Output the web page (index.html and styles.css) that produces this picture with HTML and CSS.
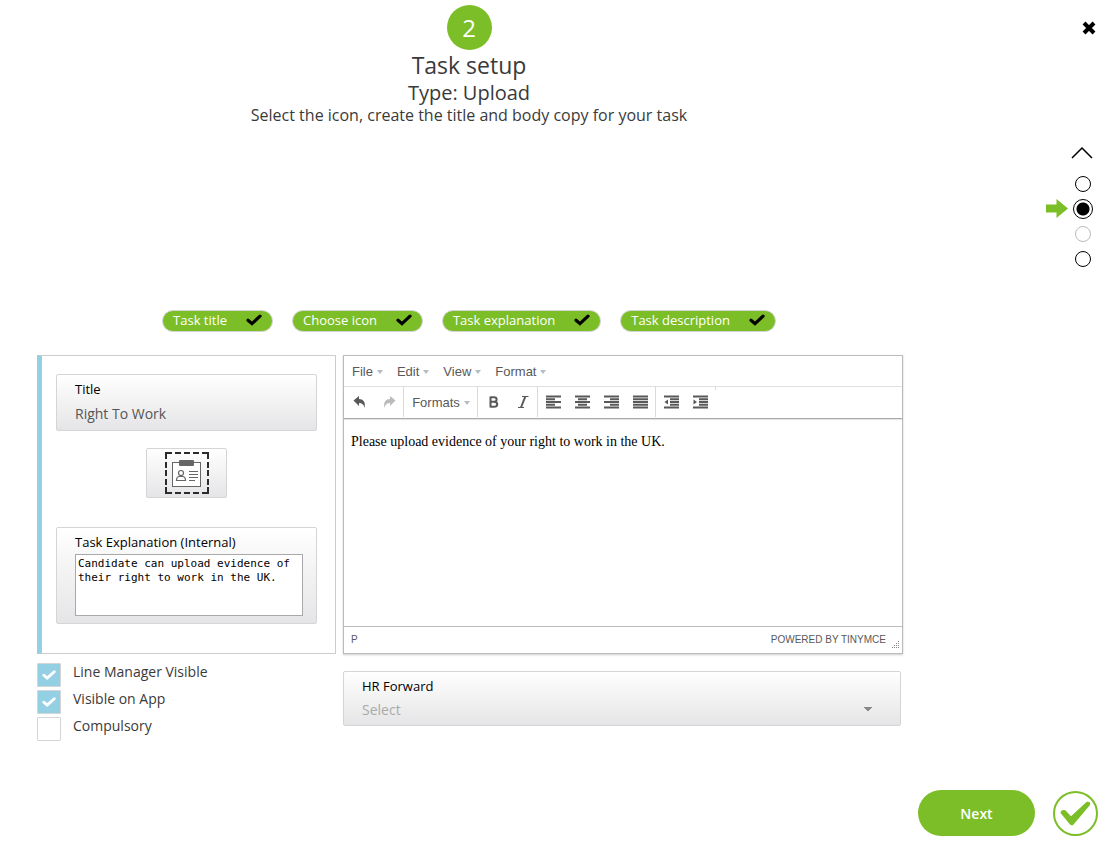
FILE: index.html
```html
<!DOCTYPE html>
<html lang="en">
<head>
    <meta charset="UTF-8">
    <meta name="viewport" content="width=device-width, initial-scale=1.0">
    <title>Task setup</title>
    <link rel="stylesheet" href="styles.css">
</head>
<body>
    <!-- shared icons -->
    <svg class="sprite" aria-hidden="true">
        <symbol id="tick" viewBox="0 0 16 12"><path d="M2 6.200 6 9.600 14 2.200" fill="none" stroke="currentColor" stroke-width="3.2" stroke-linecap="round"/></symbol>
        <symbol id="undo" viewBox="0 0 14 14"><path d="M0.5 5.500 6 1v3c4 0 7 3 5.500 9C11 9.500 9 8 6 8v3z" fill="currentColor"/></symbol>
    </svg>

    <div class="page">
        <div class="layout">
            <main class="main">
                <header class="header">
                    <div class="badge">2</div>
                    <h1>Task setup</h1>
                    <h2>Type: Upload</h2>
                    <p>Select the icon, create the title and body copy for your task</p>
                </header>

                <ul class="steps">
                    <li>Task title <svg class="tick"><use href="#tick"/></svg></li>
                    <li>Choose icon <svg class="tick"><use href="#tick"/></svg></li>
                    <li>Task explanation <svg class="tick"><use href="#tick"/></svg></li>
                    <li>Task description <svg class="tick"><use href="#tick"/></svg></li>
                </ul>

                <div class="columns">
                    <div class="left">
                        <section class="panel">
                            <div class="field">
                                <label for="title">Title</label>
                                <input type="text" id="title" value="Right To Work">
                            </div>
                            <button type="button" class="icon-btn" aria-label="Choose icon">
                                <svg width="44" height="42" viewBox="0 0 44 42" fill="none">
                                    <path d="M1 7V1h6M37 1h6v6M43 35v6h-6M7 41H1v-6M10 1h6M19 1h6M28 1h6M10 41h6M19 41h6M28 41h6M1 10v6M1 18v6M1 27v6M43 10v6M43 18v6M43 27v6" stroke="#2b2b2b" stroke-width="2"/>
                                    <rect x="7.500" y="10.500" width="28" height="24" fill="#fff" stroke="#666"/>
                                    <rect x="14" y="8" width="15" height="6" rx="1" fill="#666"/>
                                    <circle cx="16" cy="21" r="2.500" stroke="#666" stroke-width="1.200"/>
                                    <path d="M11.500 28.500c0-3 1.500-4 3-4h3c1.500 0 3 1 3 4z" stroke="#666" stroke-width="1.200"/>
                                    <path d="M24 19.500h9M24 22.500h9M24 25.500h9M24 28.500h6" stroke="#666"/>
                                </svg>
                            </button>
                            <div class="field explanation">
                                <label for="explanation">Task Explanation (Internal)</label>
                                <textarea id="explanation" spellcheck="false">Candidate can upload evidence of their right to work in the UK.</textarea>
                            </div>
                        </section>

                        <div class="checks">
                            <label class="check"><input type="checkbox" checked><svg><use href="#tick"/></svg><span>Line Manager Visible</span></label>
                            <label class="check"><input type="checkbox" checked><svg><use href="#tick"/></svg><span>Visible on App</span></label>
                            <label class="check"><input type="checkbox"><svg><use href="#tick"/></svg><span>Compulsory</span></label>
                        </div>
                    </div>

                    <div class="right">
                        <section class="editor">
                            <div class="menubar">
                                <button type="button" class="caret">File</button>
                                <button type="button" class="caret">Edit</button>
                                <button type="button" class="caret">View</button>
                                <button type="button" class="caret">Format</button>
                            </div>
                            <div class="toolbar">
                                <div class="group">
                                    <button type="button" aria-label="Undo"><svg width="14" height="14"><use href="#undo"/></svg></button>
                                    <button type="button" class="redo" aria-label="Redo" disabled><svg width="14" height="14"><use href="#undo"/></svg></button>
                                </div>
                                <div class="group formats">
                                    <button type="button" class="caret">Formats</button>
                                </div>
                                <div class="group">
                                    <button type="button" aria-label="Bold"><svg width="14" height="14" viewBox="0 0 14 14"><path d="M3.500 1.500v11M3.500 2.200H7c3.500 0 3.500 4.500 0 4.500H3.500M7 6.700c4.300 0 4.300 5.100 0 5.100H3.500" fill="none" stroke="currentColor" stroke-width="2"/></svg></button>
                                    <button type="button" aria-label="Italic"><svg width="14" height="14" viewBox="0 0 14 14"><path d="M6 1.500h6.500M2 12.500h6" stroke="currentColor"/><path d="M9.300 1.500 5 12.500" stroke="currentColor" stroke-width="2"/></svg></button>
                                </div>
                                <div class="group lines">
                                    <button type="button" aria-label="Align left"><svg width="15" height="14" viewBox="0 0 15 14"><path d="M0 1.500h15M0 4.200h9M0 7h15M0 9.800h9M0 12.500h15"/></svg></button>
                                    <button type="button" aria-label="Align center"><svg width="15" height="14" viewBox="0 0 15 14"><path d="M0 1.500h15M3 4.200h9M0 7h15M3 9.800h9M0 12.500h15"/></svg></button>
                                    <button type="button" aria-label="Align right"><svg width="15" height="14" viewBox="0 0 15 14"><path d="M0 1.500h15M6 4.200h9M0 7h15M6 9.800h9M0 12.500h15"/></svg></button>
                                    <button type="button" aria-label="Justify"><svg width="15" height="14" viewBox="0 0 15 14"><path d="M0 1.500h15M0 4.200h15M0 7h15M0 9.800h15M0 12.500h15"/></svg></button>
                                </div>
                                <div class="group lines">
                                    <button type="button" aria-label="Decrease indent"><svg width="15" height="14" viewBox="0 0 15 14"><path d="M0 1.500h15M6 4.200h9M6 7h9M6 9.800h9M0 12.500h15"/><path d="M4 4.500v5L0.500 7z" class="solid"/></svg></button>
                                    <button type="button" aria-label="Increase indent"><svg width="15" height="14" viewBox="0 0 15 14"><path d="M0 1.500h15M6 4.200h9M6 7h9M6 9.800h9M0 12.500h15"/><path d="M0.500 4.500v5L4 7z" class="solid"/></svg></button>
                                </div>
                                <div class="group empty"></div>
                            </div>
                            <div class="editor-body" contenteditable="true" spellcheck="false">
                                <p>Please upload evidence of your right to work in the UK.</p>
                            </div>
                            <div class="statusbar">
                                <span>P</span>
                                <span class="powered">POWERED BY TINYMCE</span>
                                <svg width="8" height="8" viewBox="0 0 8 8"><path d="M6 .5h2M4 2.500h4M2 4.500h6M0 6.500h8" stroke="#888" stroke-dasharray="1 1"/></svg>
                            </div>
                        </section>

                        <div class="field forward">
                            <label for="forward">HR Forward</label>
                            <select id="forward">
                                <option>Select</option>
                            </select>
                        </div>
                    </div>
                </div>
            </main>

            <aside class="side">
                <button type="button" class="close" aria-label="Close">
                    <svg width="14" height="14" viewBox="0 0 14 14"><path d="M2 2l10 10M12 2 2 12" stroke="#000" stroke-width="4"/></svg>
                </button>
                <nav class="pager">
                    <button type="button" class="up" aria-label="Previous"><svg width="22" height="13" viewBox="0 0 22 13"><path d="M1 12 11 2l10 10" fill="none" stroke="#000" stroke-width="1.500"/></svg></button>
                    <label><input type="radio" name="page" aria-label="Step 1"></label>
                    <label class="current">
                        <svg width="22" height="19" viewBox="0 0 22 19"><path d="M0 5.500h10.500V0L22 9.500 10.500 19v-5.500H0z" fill="#7cbe27"/></svg>
                        <input type="radio" name="page" aria-label="Step 2" checked>
                    </label>
                    <label><input type="radio" name="page" aria-label="Step 3" disabled></label>
                    <label><input type="radio" name="page" aria-label="Step 4"></label>
                </nav>
            </aside>
        </div>

        <footer class="footer">
            <button type="button" class="next">Next</button>
            <button type="button" class="done" aria-label="Done">
                <svg width="45" height="45" viewBox="0 0 45 45" fill="none" stroke="#7cbe27"><circle cx="22.500" cy="22.500" r="21.500" stroke-width="2"/><path d="M7.500 22c0-3 4-4 6-1.500l4.500 4.800L33.500 11c2.500-1 4.500.5 3.500 3L20.500 33.500c-1 1.200-2.500 1-3.500 0z" fill="#7cbe27" stroke="none"/></svg>
            </button>
        </footer>
    </div>
</body>
</html>
```

FILE: styles.css
```css
* {
    margin: 0;
    padding: 0;
    box-sizing: border-box;
}
body {
    font-family: 'Open Sans', sans-serif;
    font-size: 14px;
    color: #3a3a3a;
    background: #fff;
}
button, input, select, textarea {
    font: inherit;
    color: inherit;
    border: 0;
    background: none;
}
svg {
    display: block;
}
.sprite {
    position: absolute;
    width: 0;
    height: 0;
}
.page {
    display: flex;
    flex-direction: column;
    min-height: 100vh;
}
.layout {
    display: flex;
}
.main {
    flex: 1;
    padding-top: 5px;
}

/* header */
.header {
    text-align: center;
    padding-bottom: 185px;
}
.badge {
    width: 45px;
    height: 45px;
    margin: 0 auto;
    border-radius: 50%;
    background: #7cbe27;
    color: #fff;
    font-size: 24px;
    line-height: 45px;
}
.header h1 {
    font-size: 23px;
    font-weight: 400;
    line-height: 30px;
}
.header h2 {
    font-size: 20px;
    font-weight: 400;
    line-height: 25px;
}
.header p {
    font-size: 16px;
    line-height: 20px;
}

/* steps */
.steps {
    display: flex;
    justify-content: center;
    gap: 19px;
    margin-bottom: 23px;
    list-style: none;
}
.steps li {
    display: flex;
    gap: 19px;
    height: 22px;
    padding: 0 10px;
    border: 1px solid #d5d5d5;
    border-radius: 11px;
    background: #7cbe27;
    color: #fff;
    font-size: 13px;
    line-height: 18px;
}
.tick {
    width: 16px;
    height: 12px;
    margin-top: 3px;
    color: #000;
}

/* form */
.columns {
    display: flex;
    gap: 7px;
    padding: 0 35px 0 37px;
}
.left {
    width: 299px;
}
.right {
    flex: 1;
}
.panel {
    padding: 18px 18px 29px 14px;
    border: 1px solid #ccc;
    border-left: 5px solid #93d0e4;
}
.field {
    padding: 4px 14px 5px 18px;
    border: 1px solid #d5d5d5;
    border-radius: 2px;
    background: linear-gradient(#fff, #e5e5e7);
}
.field label {
    display: block;
    color: #000;
    font-size: 13px;
    line-height: 20px;
}
.field input {
    display: block;
    width: 100%;
    height: 24px;
    margin-top: 2px;
    color: #555;
}
.icon-btn {
    display: block;
    width: 81px;
    height: 50px;
    margin: 17px auto 29px;
    padding: 3px 18px;
    border: 1px solid #d5d5d5;
    border-radius: 2px;
    background: linear-gradient(#fff, #e5e5e7);
}
.explanation {
    padding: 4px 13px 7px 18px;
}
.explanation textarea {
    display: block;
    width: 100%;
    height: 62px;
    margin-top: 2px;
    padding: 2px;
    border: 1px solid #a9a9a9;
    background: #fff;
    color: #000;
    font-family: 'DejaVu Sans Mono', monospace;
    font-size: 11px;
    line-height: 14px;
    resize: none;
}
.checks {
    margin-top: 9px;
}
.check {
    display: grid;
    grid-template-columns: 24px 1fr;
    column-gap: 12px;
    height: 27px;
}
.check input {
    grid-area: 1 / 1;
    width: 24px;
    height: 24px;
    appearance: none;
    border: 1px solid #d5d5d5;
    border-radius: 1px;
}
.check input:checked {
    background: #93d0e4;
}
.check svg {
    grid-area: 1 / 1;
    width: 14px;
    height: 12px;
    margin: 6px 5px;
    color: #fff;
    visibility: hidden;
}
.check input:checked + svg {
    visibility: visible;
}
.check span {
    line-height: 17px;
}

/* editor */
.editor {
    border: 1px solid #bbb;
    box-shadow: 0 1px 2px rgba(0, 0, 0, 0.2);
    color: #595959;
    font-family: 'Liberation Sans', Arial, sans-serif;
}
.menubar {
    display: flex;
    gap: 14px;
    height: 31px;
    padding: 0 8px;
    border-bottom: 1px solid #dfdfe5;
}
.caret {
    display: flex;
    align-items: center;
    gap: 4px;
    font-size: 13px;
}
.caret::after {
    content: '';
    margin-top: 4px;
    border: 3px solid transparent;
    border-top: 4px solid #b5bcc2;
}
.toolbar {
    display: flex;
    height: 32px;
    border-bottom: 1px solid #aaa;
    box-shadow: 0 1px 1px rgba(0, 0, 0, 0.1);
}
.group {
    display: flex;
    height: 30px;
    padding-left: 1px;
}
.group + .group {
    border-left: 1px solid #d9d9de;
}
.group button {
    display: flex;
    align-items: center;
    justify-content: center;
    width: 29px;
}
.group.formats button {
    width: 72px;
}
.group.empty {
    height: 3px;
}
.lines path {
    stroke: currentColor;
    stroke-width: 2;
}
.lines .solid {
    fill: currentColor;
    stroke: none;
}
.redo {
    color: #bbb;
}
.redo svg {
    transform: scaleX(-1);
}
.editor-body {
    height: 207px;
    padding: 14px 7px;
    color: #000;
    font-family: 'Liberation Serif', 'Times New Roman', serif;
    font-size: 14px;
    line-height: 17px;
}
.statusbar {
    display: flex;
    height: 27px;
    padding: 0 2px 0 7px;
    border-top: 1px solid #bbb;
    font-size: 10px;
    line-height: 25px;
}
.powered {
    margin-left: auto;
}
.statusbar svg {
    margin: 14px 0 0 6px;
}
.forward {
    margin: 17px 2px 0 0;
}
.forward select {
    display: block;
    width: 100%;
    height: 22px;
    margin-top: 2px;
    appearance: none;
    color: #aaa;
    background: conic-gradient(from -45deg at 50% 100%, #888 90deg, transparent 0) right 13px center / 10px 5px no-repeat;
}

/* right hand navigation */
.side {
    display: flex;
    flex-direction: column;
    align-items: flex-end;
    width: 166px;
    padding: 21px 8px 0 0;
}
.close {
    height: 14px;
}
.pager {
    margin: 111px 3px 0 0;
}
.up {
    display: block;
    margin: 0 0 12px auto;
}
.pager label {
    display: flex;
    align-items: center;
    justify-content: flex-end;
    gap: 5px;
    height: 25px;
    padding-right: 2px;
}
.pager input {
    width: 16px;
    height: 16px;
    appearance: none;
    border: 1px solid #000;
    border-radius: 50%;
}
.pager .current {
    padding-right: 0;
}
.pager input:checked {
    width: 20px;
    height: 20px;
    background: radial-gradient(circle, #000 6px, transparent 7px);
}
.pager input:disabled {
    border-color: #bbb;
}

/* footer */
.footer {
    display: flex;
    justify-content: flex-end;
    gap: 18px;
    margin-top: auto;
    padding: 16px 6px 16px 0;
}
.next {
    width: 117px;
    height: 46px;
    border-radius: 23px;
    background: #7cbe27;
    color: #fff;
    font-weight: 600;
}
.done {
    width: 45px;
}
```
